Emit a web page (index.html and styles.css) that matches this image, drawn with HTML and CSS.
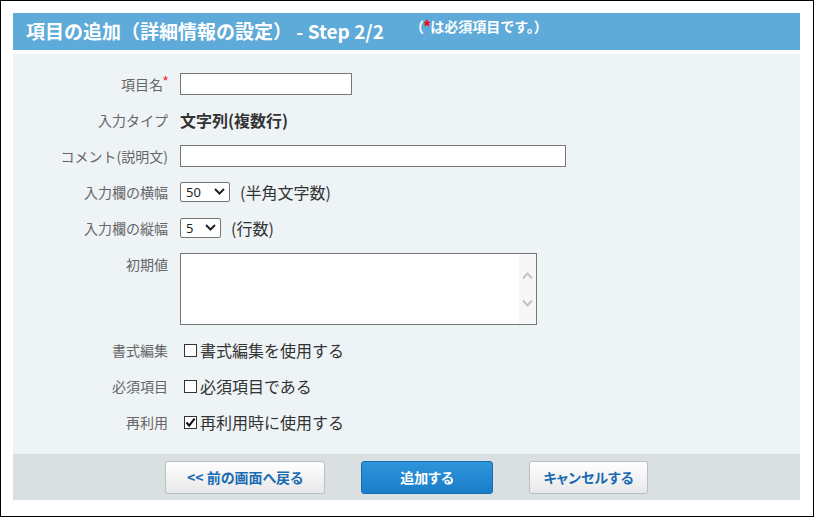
FILE: index.html
```html
<!DOCTYPE html>
<html lang="ja">
<head>
<meta charset="utf-8">
<title>項目の追加</title>
<link rel="stylesheet" href="styles.css">
</head>
<body>
<div class="frame">
  <div class="header">
    <h1 class="title">項目の追加（詳細情報の設定） - Step 2/2</h1>
    <span class="note">（<span class="req">*</span>は必須項目です。）</span>
  </div>
  <div class="panel">
    <div class="row">
      <label class="lbl">項目名<span class="star">*</span></label>
      <div class="val"><input type="text" class="inp inp-name"></div>
    </div>
    <div class="row">
      <label class="lbl">入力タイプ</label>
      <div class="val"><span class="strong">文字列(複数行)</span></div>
    </div>
    <div class="row">
      <label class="lbl">コメント(説明文)</label>
      <div class="val"><input type="text" class="inp inp-comment"></div>
    </div>
    <div class="row">
      <label class="lbl">入力欄の横幅</label>
      <div class="val">
        <span class="select-wrap">
          <select class="sel sel-50"><option>50</option></select>
          <svg class="chev" width="11" height="7" viewBox="0 0 11 7"><path d="M1 1 L5.5 5.5 L10 1" fill="none" stroke="#222" stroke-width="2"/></svg>
        </span>
        <span class="after">(半角文字数)</span>
      </div>
    </div>
    <div class="row">
      <label class="lbl">入力欄の縦幅</label>
      <div class="val">
        <span class="select-wrap">
          <select class="sel sel-5"><option>5</option></select>
          <svg class="chev" width="11" height="7" viewBox="0 0 11 7"><path d="M1 1 L5.5 5.5 L10 1" fill="none" stroke="#222" stroke-width="2"/></svg>
        </span>
        <span class="after">(行数)</span>
      </div>
    </div>
    <div class="row row-top">
      <label class="lbl">初期値</label>
      <div class="val">
        <div class="ta">
          <textarea class="ta-input"></textarea>
          <div class="sb">
            <svg width="11" height="8" viewBox="0 0 11 8"><path d="M1 6.5 L5.5 1.5 L10 6.5" fill="none" stroke="#c4c4c4" stroke-width="2"/></svg>
            <svg width="11" height="8" viewBox="0 0 11 8"><path d="M1 1.5 L5.5 6.5 L10 1.5" fill="none" stroke="#c4c4c4" stroke-width="2"/></svg>
          </div>
        </div>
      </div>
    </div>
    <div class="row">
      <label class="lbl">書式編集</label>
      <div class="val"><label class="chk"><span class="box"></span>書式編集を使用する</label></div>
    </div>
    <div class="row">
      <label class="lbl">必須項目</label>
      <div class="val"><label class="chk"><span class="box"></span>必須項目である</label></div>
    </div>
    <div class="row">
      <label class="lbl">再利用</label>
      <div class="val"><label class="chk"><span class="box"><svg width="11" height="11" viewBox="0 0 11 11"><path d="M1.5 5.5 L4.2 8.6 L9.6 1.6" fill="none" stroke="#111" stroke-width="2.2"/></svg></span>再利用時に使用する</label></div>
    </div>
  </div>
  <div class="footer">
    <button class="btn btn-back">&lt;&lt; 前の画面へ戻る</button>
    <button class="btn btn-primary">追加する</button>
    <button class="btn btn-cancel">キャンセルする</button>
  </div>
</div>
</body>
</html>
```
FILE: styles.css
```css
html, body {
  margin: 0;
  padding: 0;
  background: #fff;
}
body {
  font-family: "Noto Sans CJK JP", "Noto Sans", sans-serif;
  color: #333;
}
.frame {
  box-sizing: border-box;
  width: 814px;
  height: 517px;
  border: 1px solid #000;
  padding: 12px 13px 0 12px;
  display: flex;
  flex-direction: column;
}
.header {
  height: 37px;
  background: #5eaad9;
  display: flex;
  align-items: center;
  padding-left: 13px;
  color: #fff;
}
.title {
  margin: 0 0 2px 0;
  font-size: 19px;
  font-weight: bold;
  line-height: 22px;
  white-space: nowrap;
}
.note {
  align-self: flex-start;
  margin-top: 4px;
  margin-left: 26px;
  font-size: 14px;
  font-weight: bold;
  line-height: 18px;
  white-space: nowrap;
}
.req {
  color: #ff0000;
  font-family: "Liberation Sans", sans-serif;
  font-size: 16px;
}
.panel {
  margin-top: 4px;
  height: 400px;
  box-sizing: border-box;
  background: #eef3f6;
  padding-top: 19px;
  display: flex;
  flex-direction: column;
  gap: 14px;
}
.row {
  display: grid;
  grid-template-columns: 155px 1fr;
  column-gap: 12px;
  align-items: center;
  min-height: 22px;
}
.row-top { align-items: start; }
.lbl {
  text-align: right;
  font-size: 14px;
  line-height: 22px;
  color: #666;
  white-space: nowrap;
}
.star {
  color: #ff0000;
  font-family: "Liberation Sans", sans-serif;
  font-size: 13px;
  vertical-align: top;
  line-height: 16px;
}
.val {
  display: flex;
  align-items: center;
  font-size: 16px;
  line-height: 22px;
  color: #333;
}
.strong { font-weight: bold; font-size: 16px; }
.inp {
  box-sizing: border-box;
  height: 22px;
  border: 1px solid #767676;
  border-radius: 0;
  background: #fff;
  margin: 0;
  padding: 0 3px;
  font: inherit;
  font-size: 13px;
}
.inp-name { width: 172px; }
.inp-comment { width: 386px; }
.select-wrap {
  position: relative;
  display: inline-block;
  height: 20px;
}
.sel {
  appearance: none;
  -webkit-appearance: none;
  box-sizing: border-box;
  height: 20px;
  border: 1px solid #767676;
  border-radius: 2px;
  background: #fff;
  margin: 0;
  padding: 0 0 0 5px;
  font-family: "Noto Sans", sans-serif;
  font-size: 13px;
  color: #222;
  display: block;
}
.sel-50 { width: 50px; }
.sel-5 { width: 41px; }
.chev {
  position: absolute;
  right: 5px;
  top: 6px;
}
.after { margin-left: 10px; }
.ta {
  box-sizing: border-box;
  width: 357px;
  height: 72px;
  border: 1px solid #767676;
  background: #fff;
  display: flex;
}
.ta-input {
  flex: 1;
  border: none;
  resize: none;
  outline: none;
  margin: 0;
  padding: 2px;
  background: transparent;
  overflow: hidden;
}
.sb {
  width: 17px;
  background: #f7f7f7;
  display: flex;
  flex-direction: column;
  align-items: center;
  justify-content: center;
  gap: 19px;
}
.sb svg { display: block; }
.chk {
  display: flex;
  align-items: center;
  margin-left: 4px;
}
.box {
  box-sizing: border-box;
  width: 13px;
  height: 13px;
  border: 1px solid #333;
  background: #fff;
  margin-right: 3px;
  display: flex;
  align-items: center;
  justify-content: center;
}
.box svg { display: block; }
.footer {
  height: 46px;
  background: #dadfe2;
  display: flex;
  justify-content: center;
  align-items: center;
  gap: 36px;
}
.btn {
  box-sizing: border-box;
  height: 33px;
  border: 1px solid #b7c0c5;
  border-radius: 3px;
  background: linear-gradient(#ffffff, #e8e8e8);
  color: #1a6bb1;
  font-family: "Noto Sans CJK JP", "Noto Sans", sans-serif;
  font-size: 14px;
  font-weight: bold;
  font-feature-settings: "palt";
  padding: 0;
  margin: 0;
}
.btn-back { width: 160px; }
.btn-primary {
  width: 132px;
  background: linear-gradient(#2e95db, #1a7dc9);
  border-color: #1a6dad;
  color: #fff;
}
.btn-cancel { width: 119px; }
```
